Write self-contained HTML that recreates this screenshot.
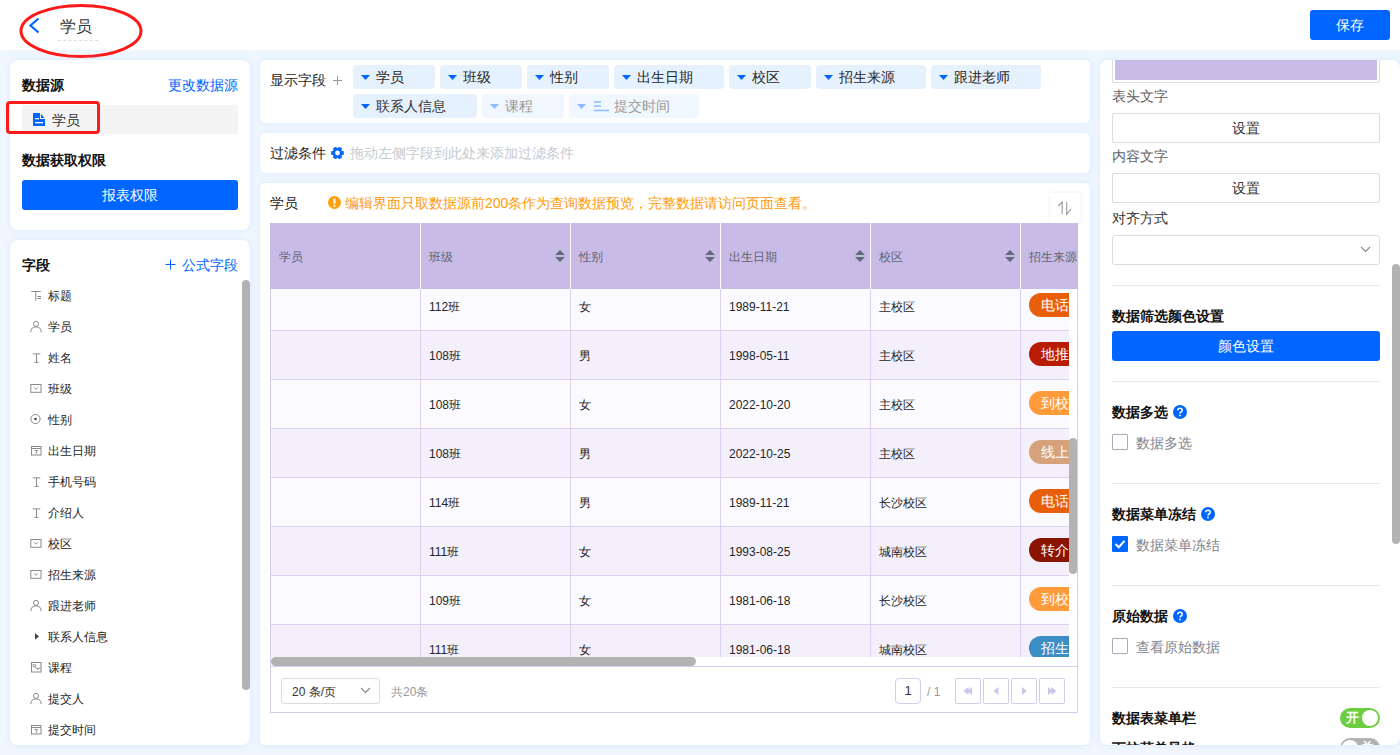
<!DOCTYPE html>
<html><head><meta charset="utf-8">
<style>
*{box-sizing:border-box;margin:0;padding:0}
html,body{width:1400px;height:755px;overflow:hidden}
body{font-family:"Liberation Sans",sans-serif;font-size:14px;color:#262626;background:#eff6fe;position:relative}
.abs{position:absolute}
.hdr{left:0;top:0;width:1400px;height:50px;background:#fff}
.card{position:absolute;background:#fff;box-shadow:0 0 5px rgba(190,222,255,.5)}
.t{position:absolute;white-space:nowrap;line-height:1}
.b{font-weight:bold;color:#111}
.blue{color:#0066ff}
.btn{position:absolute;background:#0066ff;color:#fff;border-radius:3px;text-align:center}
</style></head><body>
<div class="abs hdr"></div>
<!-- back arrow -->
<svg class="abs" style="left:28px;top:17px" width="13" height="18" viewBox="0 0 13 18"><path d="M10.5 1.5 L2.5 8.5 L10.5 15.5" fill="none" stroke="#0066ff" stroke-width="2.2"/></svg>
<div class="t" style="left:60px;top:19px;font-size:16px;color:#333">学员</div>
<div class="abs" style="left:58px;top:40px;width:40px;border-top:1px dashed #ddd"></div>
<svg class="abs" style="left:18px;top:3px" width="126" height="56"><ellipse cx="63" cy="28" rx="60" ry="25.5" fill="none" stroke="#ff1a1a" stroke-width="3"/></svg>
<div class="btn" style="left:1310px;top:10px;width:80px;height:30px;line-height:30px;font-size:14px">保存</div>

<!-- left card 1 -->
<div class="card" style="left:10px;top:60px;width:240px;height:170px;border-radius:8px"></div>
<div class="t b" style="left:22px;top:78px">数据源</div>
<div class="t blue" style="left:168px;top:78px">更改数据源</div>
<div class="abs" style="left:22px;top:105px;width:216px;height:29px;background:#f4f4f4;border-radius:2px"></div>
<svg class="abs" style="left:33px;top:113px" width="12" height="13" viewBox="0 0 12 13"><path d="M0 0H7V6H12V13H0Z" fill="#0066ff"/><path d="M8 0.8L11.5 5H8Z" fill="#0066ff"/><rect x="2" y="5" width="4" height="1.3" fill="#fff"/><rect x="2" y="9" width="8" height="1.3" fill="#fff"/></svg>
<div class="t" style="left:52px;top:113px;color:#333">学员</div>
<div class="abs" style="left:6px;top:101px;width:94px;height:33px;border:3px solid #ff1a1a;border-radius:4px"></div>
<div class="t b" style="left:22px;top:153px">数据获取权限</div>
<div class="btn" style="left:22px;top:180px;width:216px;height:30px;line-height:30px">报表权限</div>

<!-- left card 2 -->
<div class="card" style="left:10px;top:240px;width:240px;height:505px;border-radius:8px"></div>
<div class="t b" style="left:22px;top:258px">字段</div>
<svg class="abs" style="left:165px;top:259px" width="11" height="11" viewBox="0 0 11 11"><path d="M5.5 0.5V10.5M0.5 5.5H10.5" stroke="#0066ff" stroke-width="1.1"/></svg>
<div class="t blue" style="left:182px;top:258px">公式字段</div>
<div class="abs" style="left:242px;top:280px;width:8px;height:410px;background:#b3b3b3;border-radius:4px"></div>
<svg class="abs" style="left:30px;top:290px" width="12" height="12" viewBox="0 0 12 12"><path d="M1.3 1.5H10.7M5.8 1.5V10.7M7.5 6.5H11M7.5 8.5H11" stroke="#8a8a8a" stroke-width="1" fill="none"/></svg>
<div class="t" style="left:48px;top:290px;font-size:12px;color:#262626">标题</div>
<svg class="abs" style="left:30px;top:321px" width="12" height="12" viewBox="0 0 12 12"><circle cx="6" cy="2.9" r="2.5" stroke="#8a8a8a" fill="none"/><path d="M0.8 11.2 Q0.8 5.9 6 5.9 Q11.2 5.9 11.2 11.2" stroke="#8a8a8a" fill="none"/></svg>
<div class="t" style="left:48px;top:321px;font-size:12px;color:#262626">学员</div>
<svg class="abs" style="left:30px;top:352px" width="12" height="12" viewBox="0 0 12 12"><path d="M2.9 1.9H10.3M6.5 1.9V10.4M4.5 10.4H8.6" stroke="#8a8a8a" fill="none"/></svg>
<div class="t" style="left:48px;top:352px;font-size:12px;color:#262626">姓名</div>
<svg class="abs" style="left:30px;top:383px" width="12" height="12" viewBox="0 0 12 12"><rect x="0.8" y="1.5" width="10.2" height="7.8" stroke="#8a8a8a" fill="none"/><path d="M4.3 4.6 L6 6.2 L7.7 4.6" stroke="#8a8a8a" fill="none"/></svg>
<div class="t" style="left:48px;top:383px;font-size:12px;color:#262626">班级</div>
<svg class="abs" style="left:30px;top:414px" width="12" height="12" viewBox="0 0 12 12"><circle cx="5.5" cy="5" r="4.6" stroke="#8a8a8a" fill="none"/><circle cx="5.5" cy="5" r="1.3" fill="#444"/></svg>
<div class="t" style="left:48px;top:414px;font-size:12px;color:#262626">性别</div>
<svg class="abs" style="left:30px;top:445px" width="12" height="12" viewBox="0 0 12 12"><rect x="1.5" y="1.5" width="9.5" height="8.5" stroke="#8a8a8a" fill="none"/><path d="M1.5 3.5H11M4.5 5.5H7.5L5.8 8.8" stroke="#8a8a8a" fill="none"/></svg>
<div class="t" style="left:48px;top:445px;font-size:12px;color:#262626">出生日期</div>
<svg class="abs" style="left:30px;top:476px" width="12" height="12" viewBox="0 0 12 12"><path d="M2.9 1.9H10.3M6.5 1.9V10.4M4.5 10.4H8.6" stroke="#8a8a8a" fill="none"/></svg>
<div class="t" style="left:48px;top:476px;font-size:12px;color:#262626">手机号码</div>
<svg class="abs" style="left:30px;top:507px" width="12" height="12" viewBox="0 0 12 12"><path d="M2.9 1.9H10.3M6.5 1.9V10.4M4.5 10.4H8.6" stroke="#8a8a8a" fill="none"/></svg>
<div class="t" style="left:48px;top:507px;font-size:12px;color:#262626">介绍人</div>
<svg class="abs" style="left:30px;top:538px" width="12" height="12" viewBox="0 0 12 12"><rect x="0.8" y="1.5" width="10.2" height="7.8" stroke="#8a8a8a" fill="none"/><path d="M4.3 4.6 L6 6.2 L7.7 4.6" stroke="#8a8a8a" fill="none"/></svg>
<div class="t" style="left:48px;top:538px;font-size:12px;color:#262626">校区</div>
<svg class="abs" style="left:30px;top:569px" width="12" height="12" viewBox="0 0 12 12"><rect x="0.8" y="1.5" width="10.2" height="7.8" stroke="#8a8a8a" fill="none"/><path d="M4.3 4.6 L6 6.2 L7.7 4.6" stroke="#8a8a8a" fill="none"/></svg>
<div class="t" style="left:48px;top:569px;font-size:12px;color:#262626">招生来源</div>
<svg class="abs" style="left:30px;top:600px" width="12" height="12" viewBox="0 0 12 12"><circle cx="6" cy="2.9" r="2.5" stroke="#8a8a8a" fill="none"/><path d="M0.8 11.2 Q0.8 5.9 6 5.9 Q11.2 5.9 11.2 11.2" stroke="#8a8a8a" fill="none"/></svg>
<div class="t" style="left:48px;top:600px;font-size:12px;color:#262626">跟进老师</div>
<svg class="abs" style="left:30px;top:631px" width="12" height="12" viewBox="0 0 12 12"><path d="M5 2 L9 5.4 L5 8.8Z" fill="#444"/></svg>
<div class="t" style="left:48px;top:631px;font-size:12px;color:#262626">联系人信息</div>
<svg class="abs" style="left:30px;top:662px" width="12" height="12" viewBox="0 0 12 12"><rect x="1.5" y="0.5" width="9.5" height="9.5" stroke="#8a8a8a" fill="none"/><circle cx="4.3" cy="3.6" r="1.4" stroke="#8a8a8a" fill="none"/><path d="M5.3 4.8 L7.8 7.6 M6.8 6.8 L10.5 6" stroke="#8a8a8a" fill="none"/></svg>
<div class="t" style="left:48px;top:662px;font-size:12px;color:#262626">课程</div>
<svg class="abs" style="left:30px;top:693px" width="12" height="12" viewBox="0 0 12 12"><circle cx="6" cy="2.9" r="2.5" stroke="#8a8a8a" fill="none"/><path d="M0.8 11.2 Q0.8 5.9 6 5.9 Q11.2 5.9 11.2 11.2" stroke="#8a8a8a" fill="none"/></svg>
<div class="t" style="left:48px;top:693px;font-size:12px;color:#262626">提交人</div>
<svg class="abs" style="left:30px;top:724px" width="12" height="12" viewBox="0 0 12 12"><rect x="1.5" y="1.5" width="9.5" height="8.5" stroke="#8a8a8a" fill="none"/><path d="M1.5 3.5H11M4.5 5.5H7.5L5.8 8.8" stroke="#8a8a8a" fill="none"/></svg>
<div class="t" style="left:48px;top:724px;font-size:12px;color:#262626">提交时间</div>

<!-- middle cards -->
<div class="card" style="left:260px;top:60px;width:830px;height:63px;border-radius:5px"></div>
<div class="t" style="left:270px;top:73px;color:#222">显示字段</div>
<svg class="abs" style="left:333px;top:76px" width="9" height="9" viewBox="0 0 9 9"><path d="M4.5 0V9M0 4.5H9" stroke="#999" stroke-width="1"/></svg>
<div class="abs" style="left:353px;top:65px;width:82px;height:24px;background:#e6f1fe;border-radius:4px"></div>
<svg class="abs" style="left:361px;top:75px" width="9" height="5" viewBox="0 0 9 5"><path d="M0 0H9L4.5 5Z" fill="#0066ff"/></svg>
<div class="t" style="left:376px;top:70px;color:#262626">学员</div>
<div class="abs" style="left:440px;top:65px;width:82px;height:24px;background:#e6f1fe;border-radius:4px"></div>
<svg class="abs" style="left:448px;top:75px" width="9" height="5" viewBox="0 0 9 5"><path d="M0 0H9L4.5 5Z" fill="#0066ff"/></svg>
<div class="t" style="left:463px;top:70px;color:#262626">班级</div>
<div class="abs" style="left:527px;top:65px;width:82px;height:24px;background:#e6f1fe;border-radius:4px"></div>
<svg class="abs" style="left:535px;top:75px" width="9" height="5" viewBox="0 0 9 5"><path d="M0 0H9L4.5 5Z" fill="#0066ff"/></svg>
<div class="t" style="left:550px;top:70px;color:#262626">性别</div>
<div class="abs" style="left:614px;top:65px;width:110px;height:24px;background:#e6f1fe;border-radius:4px"></div>
<svg class="abs" style="left:622px;top:75px" width="9" height="5" viewBox="0 0 9 5"><path d="M0 0H9L4.5 5Z" fill="#0066ff"/></svg>
<div class="t" style="left:637px;top:70px;color:#262626">出生日期</div>
<div class="abs" style="left:729px;top:65px;width:82px;height:24px;background:#e6f1fe;border-radius:4px"></div>
<svg class="abs" style="left:737px;top:75px" width="9" height="5" viewBox="0 0 9 5"><path d="M0 0H9L4.5 5Z" fill="#0066ff"/></svg>
<div class="t" style="left:752px;top:70px;color:#262626">校区</div>
<div class="abs" style="left:816px;top:65px;width:110px;height:24px;background:#e6f1fe;border-radius:4px"></div>
<svg class="abs" style="left:824px;top:75px" width="9" height="5" viewBox="0 0 9 5"><path d="M0 0H9L4.5 5Z" fill="#0066ff"/></svg>
<div class="t" style="left:839px;top:70px;color:#262626">招生来源</div>
<div class="abs" style="left:931px;top:65px;width:110px;height:24px;background:#e6f1fe;border-radius:4px"></div>
<svg class="abs" style="left:939px;top:75px" width="9" height="5" viewBox="0 0 9 5"><path d="M0 0H9L4.5 5Z" fill="#0066ff"/></svg>
<div class="t" style="left:954px;top:70px;color:#262626">跟进老师</div>
<div class="abs" style="left:353px;top:94px;width:124px;height:24px;background:#e6f1fe;border-radius:4px"></div>
<svg class="abs" style="left:361px;top:104px" width="9" height="5" viewBox="0 0 9 5"><path d="M0 0H9L4.5 5Z" fill="#0066ff"/></svg>
<div class="t" style="left:376px;top:99px;color:#333">联系人信息</div>
<div class="abs" style="left:482px;top:94px;width:82px;height:24px;background:#f0f7ff;border-radius:4px"></div>
<svg class="abs" style="left:490px;top:104px" width="9" height="5" viewBox="0 0 9 5"><path d="M0 0H9L4.5 5Z" fill="#8fbaff"/></svg>
<div class="t" style="left:505px;top:99px;color:#999">课程</div>
<div class="abs" style="left:569px;top:94px;width:130px;height:24px;background:#f0f7ff;border-radius:4px"></div>
<svg class="abs" style="left:577px;top:104px" width="9" height="5" viewBox="0 0 9 5"><path d="M0 0H9L4.5 5Z" fill="#8fbaff"/></svg>
<svg class="abs" style="left:593px;top:98px" width="16" height="14" viewBox="0 0 16 14"><path d="M1 4H8M1 8H8M1 12.5H16" stroke="#8fbaff" stroke-width="1.3"/></svg>
<div class="t" style="left:614px;top:99px;color:#999">提交时间</div>

<div class="card" style="left:260px;top:133px;width:830px;height:40px;border-radius:5px"></div>
<div class="t" style="left:270px;top:146px;color:#222">过滤条件</div>
<svg class="abs" style="left:331px;top:147px" width="13" height="12" viewBox="-6.5 -6 13 12"><g fill="#0066ff"><circle r="4.9"/><rect x="-1.9" y="-6.3" width="3.8" height="12.6" rx="0.6" transform="rotate(30)"/><rect x="-1.9" y="-6.3" width="3.8" height="12.6" rx="0.6" transform="rotate(90)"/><rect x="-1.9" y="-6.3" width="3.8" height="12.6" rx="0.6" transform="rotate(150)"/></g><circle r="2.4" fill="#fff"/></svg>
<div class="t" style="left:350px;top:146px;color:#c4cad3">拖动左侧字段到此处来添加过滤条件</div>

<div class="card" style="left:260px;top:183px;width:830px;height:562px;border-radius:5px"></div>
<div class="t" style="left:270px;top:196px;color:#222">学员</div>
<svg class="abs" style="left:328px;top:196px" width="13" height="13" viewBox="0 0 13 13"><circle cx="6.5" cy="6.5" r="6.5" fill="#ff9f0a"/><rect x="5.5" y="2.6" width="2" height="5.2" fill="#fff"/><rect x="5.5" y="9" width="2" height="1.8" fill="#fff"/></svg>
<div class="t" style="left:345px;top:196px;color:#ff9a0a">编辑界面只取数据源前200条作为查询数据预览，完整数据请访问页面查看。</div>
<div class="abs" style="left:1050px;top:193px;width:30px;height:30px;background:#fff;box-shadow:0 0 4px rgba(0,0,0,.08)"></div>
<svg class="abs" style="left:1050px;top:193px" width="30" height="30" viewBox="0 0 30 30"><path d="M8.2 13 L12.2 9 L12.2 21.2 M16.7 9 L16.7 21.2 L21 16.2" fill="none" stroke="#9a9a9a" stroke-width="1.1"/></svg>

<div class="abs" style="left:270px;top:289px;width:799px;height:368px;overflow:hidden">
<div class="abs" style="left:0;top:-7px;width:820px;height:49px;background:#fbfaff;border-bottom:1px solid #dcd1f1"></div>
<div class="abs" style="left:150px;top:-7px;width:1px;height:49px;background:#dcd1f1"></div>
<div class="abs" style="left:300px;top:-7px;width:1px;height:49px;background:#dcd1f1"></div>
<div class="abs" style="left:450px;top:-7px;width:1px;height:49px;background:#dcd1f1"></div>
<div class="abs" style="left:600px;top:-7px;width:1px;height:49px;background:#dcd1f1"></div>
<div class="abs" style="left:750px;top:-7px;width:1px;height:49px;background:#dcd1f1"></div>
<div class="t" style="left:159px;top:12px;font-size:12px;color:#262626">112班</div>
<div class="t" style="left:309px;top:12px;font-size:12px;color:#262626">女</div>
<div class="t" style="left:459px;top:12px;font-size:12px;color:#262626">1989-11-21</div>
<div class="t" style="left:609px;top:12px;font-size:12px;color:#262626">主校区</div>
<div class="abs" style="left:759px;top:4px;width:70px;height:24px;border-radius:12px;background:#e85e0b;color:#fff;font-size:14px;line-height:24px;padding-left:12px;white-space:nowrap">电话来源</div>
<div class="abs" style="left:0;top:42px;width:820px;height:49px;background:#f4f0fb;border-bottom:1px solid #dcd1f1"></div>
<div class="abs" style="left:150px;top:42px;width:1px;height:49px;background:#dcd1f1"></div>
<div class="abs" style="left:300px;top:42px;width:1px;height:49px;background:#dcd1f1"></div>
<div class="abs" style="left:450px;top:42px;width:1px;height:49px;background:#dcd1f1"></div>
<div class="abs" style="left:600px;top:42px;width:1px;height:49px;background:#dcd1f1"></div>
<div class="abs" style="left:750px;top:42px;width:1px;height:49px;background:#dcd1f1"></div>
<div class="t" style="left:159px;top:61px;font-size:12px;color:#262626">108班</div>
<div class="t" style="left:309px;top:61px;font-size:12px;color:#262626">男</div>
<div class="t" style="left:459px;top:61px;font-size:12px;color:#262626">1998-05-11</div>
<div class="t" style="left:609px;top:61px;font-size:12px;color:#262626">主校区</div>
<div class="abs" style="left:759px;top:53px;width:70px;height:24px;border-radius:12px;background:#b81c04;color:#fff;font-size:14px;line-height:24px;padding-left:12px;white-space:nowrap">地推来源</div>
<div class="abs" style="left:0;top:91px;width:820px;height:49px;background:#fbfaff;border-bottom:1px solid #dcd1f1"></div>
<div class="abs" style="left:150px;top:91px;width:1px;height:49px;background:#dcd1f1"></div>
<div class="abs" style="left:300px;top:91px;width:1px;height:49px;background:#dcd1f1"></div>
<div class="abs" style="left:450px;top:91px;width:1px;height:49px;background:#dcd1f1"></div>
<div class="abs" style="left:600px;top:91px;width:1px;height:49px;background:#dcd1f1"></div>
<div class="abs" style="left:750px;top:91px;width:1px;height:49px;background:#dcd1f1"></div>
<div class="t" style="left:159px;top:110px;font-size:12px;color:#262626">108班</div>
<div class="t" style="left:309px;top:110px;font-size:12px;color:#262626">女</div>
<div class="t" style="left:459px;top:110px;font-size:12px;color:#262626">2022-10-20</div>
<div class="t" style="left:609px;top:110px;font-size:12px;color:#262626">主校区</div>
<div class="abs" style="left:759px;top:102px;width:70px;height:24px;border-radius:12px;background:#ff9b3b;color:#fff;font-size:14px;line-height:24px;padding-left:12px;white-space:nowrap">到校来源</div>
<div class="abs" style="left:0;top:140px;width:820px;height:49px;background:#f4f0fb;border-bottom:1px solid #dcd1f1"></div>
<div class="abs" style="left:150px;top:140px;width:1px;height:49px;background:#dcd1f1"></div>
<div class="abs" style="left:300px;top:140px;width:1px;height:49px;background:#dcd1f1"></div>
<div class="abs" style="left:450px;top:140px;width:1px;height:49px;background:#dcd1f1"></div>
<div class="abs" style="left:600px;top:140px;width:1px;height:49px;background:#dcd1f1"></div>
<div class="abs" style="left:750px;top:140px;width:1px;height:49px;background:#dcd1f1"></div>
<div class="t" style="left:159px;top:159px;font-size:12px;color:#262626">108班</div>
<div class="t" style="left:309px;top:159px;font-size:12px;color:#262626">男</div>
<div class="t" style="left:459px;top:159px;font-size:12px;color:#262626">2022-10-25</div>
<div class="t" style="left:609px;top:159px;font-size:12px;color:#262626">主校区</div>
<div class="abs" style="left:759px;top:151px;width:70px;height:24px;border-radius:12px;background:#d6a27b;color:#fff;font-size:14px;line-height:24px;padding-left:12px;white-space:nowrap">线上来源</div>
<div class="abs" style="left:0;top:189px;width:820px;height:49px;background:#fbfaff;border-bottom:1px solid #dcd1f1"></div>
<div class="abs" style="left:150px;top:189px;width:1px;height:49px;background:#dcd1f1"></div>
<div class="abs" style="left:300px;top:189px;width:1px;height:49px;background:#dcd1f1"></div>
<div class="abs" style="left:450px;top:189px;width:1px;height:49px;background:#dcd1f1"></div>
<div class="abs" style="left:600px;top:189px;width:1px;height:49px;background:#dcd1f1"></div>
<div class="abs" style="left:750px;top:189px;width:1px;height:49px;background:#dcd1f1"></div>
<div class="t" style="left:159px;top:208px;font-size:12px;color:#262626">114班</div>
<div class="t" style="left:309px;top:208px;font-size:12px;color:#262626">男</div>
<div class="t" style="left:459px;top:208px;font-size:12px;color:#262626">1989-11-21</div>
<div class="t" style="left:609px;top:208px;font-size:12px;color:#262626">长沙校区</div>
<div class="abs" style="left:759px;top:200px;width:70px;height:24px;border-radius:12px;background:#e85e0b;color:#fff;font-size:14px;line-height:24px;padding-left:12px;white-space:nowrap">电话来源</div>
<div class="abs" style="left:0;top:238px;width:820px;height:49px;background:#f4f0fb;border-bottom:1px solid #dcd1f1"></div>
<div class="abs" style="left:150px;top:238px;width:1px;height:49px;background:#dcd1f1"></div>
<div class="abs" style="left:300px;top:238px;width:1px;height:49px;background:#dcd1f1"></div>
<div class="abs" style="left:450px;top:238px;width:1px;height:49px;background:#dcd1f1"></div>
<div class="abs" style="left:600px;top:238px;width:1px;height:49px;background:#dcd1f1"></div>
<div class="abs" style="left:750px;top:238px;width:1px;height:49px;background:#dcd1f1"></div>
<div class="t" style="left:159px;top:257px;font-size:12px;color:#262626">111班</div>
<div class="t" style="left:309px;top:257px;font-size:12px;color:#262626">女</div>
<div class="t" style="left:459px;top:257px;font-size:12px;color:#262626">1993-08-25</div>
<div class="t" style="left:609px;top:257px;font-size:12px;color:#262626">城南校区</div>
<div class="abs" style="left:759px;top:249px;width:70px;height:24px;border-radius:12px;background:#8a1402;color:#fff;font-size:14px;line-height:24px;padding-left:12px;white-space:nowrap">转介来源</div>
<div class="abs" style="left:0;top:287px;width:820px;height:49px;background:#fbfaff;border-bottom:1px solid #dcd1f1"></div>
<div class="abs" style="left:150px;top:287px;width:1px;height:49px;background:#dcd1f1"></div>
<div class="abs" style="left:300px;top:287px;width:1px;height:49px;background:#dcd1f1"></div>
<div class="abs" style="left:450px;top:287px;width:1px;height:49px;background:#dcd1f1"></div>
<div class="abs" style="left:600px;top:287px;width:1px;height:49px;background:#dcd1f1"></div>
<div class="abs" style="left:750px;top:287px;width:1px;height:49px;background:#dcd1f1"></div>
<div class="t" style="left:159px;top:306px;font-size:12px;color:#262626">109班</div>
<div class="t" style="left:309px;top:306px;font-size:12px;color:#262626">女</div>
<div class="t" style="left:459px;top:306px;font-size:12px;color:#262626">1981-06-18</div>
<div class="t" style="left:609px;top:306px;font-size:12px;color:#262626">长沙校区</div>
<div class="abs" style="left:759px;top:298px;width:70px;height:24px;border-radius:12px;background:#ff9b3b;color:#fff;font-size:14px;line-height:24px;padding-left:12px;white-space:nowrap">到校来源</div>
<div class="abs" style="left:0;top:336px;width:820px;height:49px;background:#f4f0fb;border-bottom:1px solid #dcd1f1"></div>
<div class="abs" style="left:150px;top:336px;width:1px;height:49px;background:#dcd1f1"></div>
<div class="abs" style="left:300px;top:336px;width:1px;height:49px;background:#dcd1f1"></div>
<div class="abs" style="left:450px;top:336px;width:1px;height:49px;background:#dcd1f1"></div>
<div class="abs" style="left:600px;top:336px;width:1px;height:49px;background:#dcd1f1"></div>
<div class="abs" style="left:750px;top:336px;width:1px;height:49px;background:#dcd1f1"></div>
<div class="t" style="left:159px;top:355px;font-size:12px;color:#262626">111班</div>
<div class="t" style="left:309px;top:355px;font-size:12px;color:#262626">女</div>
<div class="t" style="left:459px;top:355px;font-size:12px;color:#262626">1981-06-18</div>
<div class="t" style="left:609px;top:355px;font-size:12px;color:#262626">城南校区</div>
<div class="abs" style="left:759px;top:347px;width:70px;height:24px;border-radius:12px;background:#3b8dc6;color:#fff;font-size:14px;line-height:24px;padding-left:12px;white-space:nowrap">招生来源</div>
</div>
<div class="abs" style="left:270px;top:223px;width:808px;height:66px;background:#c8bbe7;overflow:hidden">
<div class="t" style="left:9px;top:28px;font-size:12px;color:#5e6470">学员</div>
<div class="abs" style="left:150px;top:0;width:1px;height:66px;background:#fff"></div>
<div class="t" style="left:159px;top:28px;font-size:12px;color:#5e6470">班级</div>
<svg class="abs" style="left:285px;top:27px" width="10" height="13" viewBox="0 0 10 13"><path d="M0 5H10L5 0Z M0 7H10L5 12Z" fill="#5f6a7a"/></svg>
<div class="abs" style="left:300px;top:0;width:1px;height:66px;background:#fff"></div>
<div class="t" style="left:309px;top:28px;font-size:12px;color:#5e6470">性别</div>
<svg class="abs" style="left:435px;top:27px" width="10" height="13" viewBox="0 0 10 13"><path d="M0 5H10L5 0Z M0 7H10L5 12Z" fill="#5f6a7a"/></svg>
<div class="abs" style="left:450px;top:0;width:1px;height:66px;background:#fff"></div>
<div class="t" style="left:459px;top:28px;font-size:12px;color:#5e6470">出生日期</div>
<svg class="abs" style="left:585px;top:27px" width="10" height="13" viewBox="0 0 10 13"><path d="M0 5H10L5 0Z M0 7H10L5 12Z" fill="#5f6a7a"/></svg>
<div class="abs" style="left:600px;top:0;width:1px;height:66px;background:#fff"></div>
<div class="t" style="left:609px;top:28px;font-size:12px;color:#5e6470">校区</div>
<svg class="abs" style="left:735px;top:27px" width="10" height="13" viewBox="0 0 10 13"><path d="M0 5H10L5 0Z M0 7H10L5 12Z" fill="#5f6a7a"/></svg>
<div class="abs" style="left:750px;top:0;width:1px;height:66px;background:#fff"></div>
<div class="t" style="left:759px;top:28px;font-size:12px;color:#5e6470">招生来源</div>
</div>
<div class="abs" style="left:270px;top:289px;width:1px;height:424px;background:#d6caef"></div>
<div class="abs" style="left:1077px;top:289px;width:1px;height:424px;background:#d6caef"></div>
<div class="abs" style="left:1069px;top:289px;width:8px;height:368px;background:#fff"></div>
<div class="abs" style="left:1069px;top:438px;width:8px;height:136px;background:#b3b3b3;border-radius:4px"></div>
<div class="abs" style="left:271px;top:657px;width:806px;height:9px;background:#fff"></div>
<div class="abs" style="left:271px;top:657px;width:425px;height:9px;background:#b3b3b3;border-radius:4.5px"></div>
<div class="abs" style="left:270px;top:666px;width:808px;height:47px;border:1px solid #d6caef;border-top:1px solid #d6caef"></div>
<div class="abs" style="left:281px;top:678px;width:99px;height:26px;border:1px solid #dcdcdc;border-radius:3px"></div>
<div class="t" style="left:292px;top:686px;font-size:12px;color:#333">20 条/页</div>
<svg class="abs" style="left:360px;top:687px" width="11" height="7" viewBox="0 0 11 7"><path d="M1 1L5.5 5.5L10 1" fill="none" stroke="#888" stroke-width="1.1"/></svg>
<div class="t" style="left:391px;top:686px;font-size:12px;color:#999">共20条</div>
<div class="abs" style="left:895px;top:678px;width:26px;height:26px;border:1px solid #d6caef;border-radius:4px;text-align:center;line-height:24px;font-size:13px;color:#333">1</div>
<div class="t" style="left:927px;top:686px;font-size:12px;color:#999">/ 1</div>
<div class="abs" style="left:955px;top:678px;width:26px;height:26px;border:1px solid #d6caef;border-radius:2px"></div>
<svg class="abs" style="left:961px;top:686px" width="14" height="10" viewBox="0 0 14 10"><path d="M7.5 1L2.5 5L7.5 9ZM11 1L6 5L11 9Z" fill="#cfc4ea"/></svg>
<div class="abs" style="left:983px;top:678px;width:26px;height:26px;border:1px solid #d6caef;border-radius:2px"></div>
<svg class="abs" style="left:989px;top:686px" width="14" height="10" viewBox="0 0 14 10"><path d="M9.5 1L4.5 5L9.5 9Z" fill="#cfc4ea"/></svg>
<div class="abs" style="left:1011px;top:678px;width:26px;height:26px;border:1px solid #d6caef;border-radius:2px"></div>
<svg class="abs" style="left:1017px;top:686px" width="14" height="10" viewBox="0 0 14 10"><path d="M5 1L10 5L5 9Z" fill="#cfc4ea"/></svg>
<div class="abs" style="left:1039px;top:678px;width:26px;height:26px;border:1px solid #d6caef;border-radius:2px"></div>
<svg class="abs" style="left:1045px;top:686px" width="14" height="10" viewBox="0 0 14 10"><path d="M3 1L8 5L3 9ZM6.5 1L11.5 5L6.5 9Z" fill="#cfc4ea"/></svg>

<!-- right panel -->
<div class="card" style="left:1100px;top:60px;width:300px;height:685px;border-radius:8px;overflow:hidden"></div>
<div class="abs" style="left:1100px;top:60px;width:300px;height:685px;overflow:hidden;border-radius:8px"><div class="abs" style="left:-1100px;top:-60px;width:1400px;height:755px">
<div class="abs" style="left:1112px;top:40px;width:268px;height:43px;border:1px solid #dcdcdc;border-radius:2px;padding:2px"><div style="width:100%;height:100%;background:#c8bbe7"></div></div>
<div class="t" style="left:1112px;top:89px;color:#606266">表头文字</div>
<div class="abs" style="left:1112px;top:113px;width:268px;height:30px;border:1px solid #dcdcdc;border-radius:2px;text-align:center;line-height:28px;color:#333">设置</div>
<div class="t" style="left:1112px;top:149px;color:#606266">内容文字</div>
<div class="abs" style="left:1112px;top:173px;width:268px;height:30px;border:1px solid #dcdcdc;border-radius:2px;text-align:center;line-height:28px;color:#333">设置</div>
<div class="t" style="left:1112px;top:211px;color:#333">对齐方式</div>
<div class="abs" style="left:1112px;top:235px;width:268px;height:30px;border:1px solid #dcdcdc;border-radius:3px"></div>
<svg class="abs" style="left:1360px;top:246px" width="11" height="7" viewBox="0 0 11 7"><path d="M1 1L5.5 5.5L10 1" fill="none" stroke="#888" stroke-width="1.1"/></svg>
<div class="abs" style="left:1112px;top:285px;width:268px;height:1px;background:#e8e8e8"></div>
<div class="t b" style="left:1112px;top:309px">数据筛选颜色设置</div>
<div class="btn" style="left:1112px;top:331px;width:268px;height:30px;line-height:30px">颜色设置</div>
<div class="abs" style="left:1112px;top:381px;width:268px;height:1px;background:#e8e8e8"></div>
<div class="t b" style="left:1112px;top:405px">数据多选</div>
<svg class="abs" style="left:1173px;top:405px" width="14" height="14" viewBox="0 0 14 14"><circle cx="7" cy="7" r="7" fill="#0066ff"/><path d="M4.8 5.3 Q4.8 3.2 7 3.2 Q9.2 3.2 9.2 5.2 Q9.2 6.4 8 7 Q7 7.5 7 8.6" fill="none" stroke="#fff" stroke-width="1.5"/><rect x="6.2" y="9.7" width="1.6" height="1.6" fill="#fff"/></svg>
<div class="abs" style="left:1112px;top:434px;width:16px;height:16px;border:1px solid #a6a9b6;border-radius:1px;background:#fff"></div>
<div class="t" style="left:1136px;top:436px;color:#80858f">数据多选</div>
<div class="abs" style="left:1112px;top:483px;width:268px;height:1px;background:#e8e8e8"></div>
<div class="t b" style="left:1112px;top:507px">数据菜单冻结</div>
<svg class="abs" style="left:1201px;top:507px" width="14" height="14" viewBox="0 0 14 14"><circle cx="7" cy="7" r="7" fill="#0066ff"/><path d="M4.8 5.3 Q4.8 3.2 7 3.2 Q9.2 3.2 9.2 5.2 Q9.2 6.4 8 7 Q7 7.5 7 8.6" fill="none" stroke="#fff" stroke-width="1.5"/><rect x="6.2" y="9.7" width="1.6" height="1.6" fill="#fff"/></svg>
<svg class="abs" style="left:1112px;top:536px" width="16" height="16" viewBox="0 0 16 16"><rect width="16" height="16" rx="1" fill="#0066ff"/><path d="M3.5 8 L6.8 11.2 L12.5 4.8" fill="none" stroke="#fff" stroke-width="2"/></svg>
<div class="t" style="left:1136px;top:538px;color:#80858f">数据菜单冻结</div>
<div class="abs" style="left:1112px;top:585px;width:268px;height:1px;background:#e8e8e8"></div>
<div class="t b" style="left:1112px;top:609px">原始数据</div>
<svg class="abs" style="left:1173px;top:609px" width="14" height="14" viewBox="0 0 14 14"><circle cx="7" cy="7" r="7" fill="#0066ff"/><path d="M4.8 5.3 Q4.8 3.2 7 3.2 Q9.2 3.2 9.2 5.2 Q9.2 6.4 8 7 Q7 7.5 7 8.6" fill="none" stroke="#fff" stroke-width="1.5"/><rect x="6.2" y="9.7" width="1.6" height="1.6" fill="#fff"/></svg>
<div class="abs" style="left:1112px;top:638px;width:16px;height:16px;border:1px solid #a6a9b6;border-radius:1px;background:#fff"></div>
<div class="t" style="left:1136px;top:640px;color:#80858f">查看原始数据</div>
<div class="abs" style="left:1112px;top:687px;width:268px;height:1px;background:#e8e8e8"></div>
<div class="t b" style="left:1112px;top:711px">数据表菜单栏</div>
<div class="abs" style="left:1340px;top:708px;width:40px;height:20px;border-radius:10px;background:#6ecd40"></div>
<div class="t" style="left:1346px;top:711px;font-size:13px;color:#fff;font-weight:bold">开</div>
<div class="abs" style="left:1362px;top:710px;width:16px;height:16px;border-radius:50%;background:#fff"></div>
<div class="t b" style="left:1112px;top:741px">下拉菜单风格</div>
<div class="abs" style="left:1340px;top:738px;width:40px;height:20px;border-radius:10px;background:#b3b3b3"></div>
<div class="abs" style="left:1342px;top:740px;width:16px;height:16px;border-radius:50%;background:#fff"></div>
<div class="t" style="left:1361px;top:741px;font-size:13px;color:#fff;font-weight:bold">关</div>
<div class="abs" style="left:1392px;top:264px;width:8px;height:280px;background:#b3b3b3;border-radius:4px"></div>
</div></div>

</body></html>
